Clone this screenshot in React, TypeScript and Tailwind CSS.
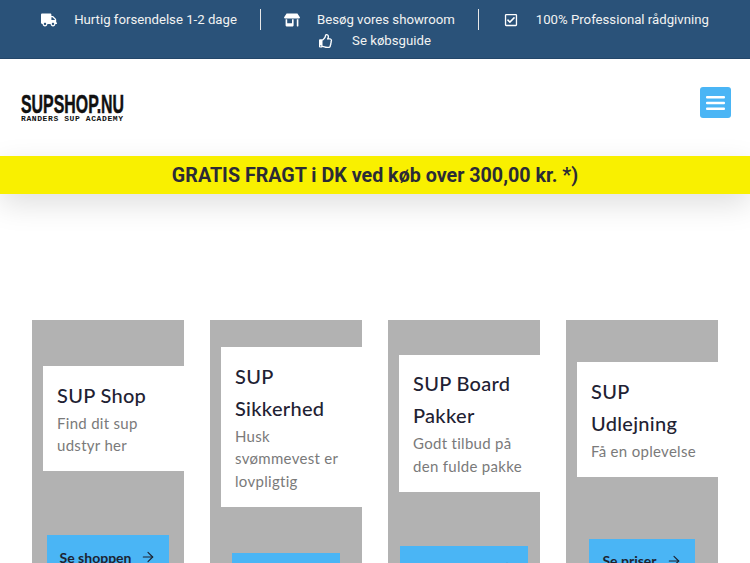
import React from 'react';
import { FaTruck, FaStoreAlt, FaRegCheckSquare, FaRegThumbsUp } from 'react-icons/fa';
import { ArrowRight } from 'lucide-react';

const cards = [
  { title: ['SUP Shop'], body: ['Find dit sup', 'udstyr her'], button: 'Se shoppen', top: 'mt-[46px]', gap: 'mt-[64px]' },
  { title: ['SUP', 'Sikkerhed'], body: ['Husk', 'svømmevest er', 'lovpligtig'], button: 'Se vester', top: 'mt-[27px]', gap: 'mt-[46px]' },
  { title: ['SUP Board', 'Pakker'], body: ['Godt tilbud på', 'den fulde pakke'], button: 'Se pakkerne', top: 'mt-[34.5px]', gap: 'mt-[54.5px]' },
  { title: ['SUP', 'Udlejning'], body: ['Få en oplevelse'], button: 'Se priser', top: 'mt-[42px]', gap: 'mt-[62px]' },
];

const App: React.FC = () => {
  return (
    <div className="h-[563px] w-[750px] overflow-hidden bg-white font-['Roboto',sans-serif]">
      {/* Top bar */}
      <div className="h-[59px] bg-[#2a5279] border-b border-[#234669] pt-[9px] text-[13.2px] leading-[21px] text-[#f2f2f2]">
        <div className="flex justify-center">
          <div className="flex items-center pr-[23px] h-[21px]">
            <FaTruck className="text-[16px] text-white mr-[17px]" />
            <span>Hurtig forsendelse 1-2 dage</span>
          </div>
          <div className="flex items-center pl-[23px] pr-[23px] h-[21px] border-l border-[#e8e8e8]">
            <FaStoreAlt className="text-[16px] text-white mr-[17px]" />
            <span>Besøg vores showroom</span>
          </div>
          <div className="flex items-center pl-[25px] h-[21px] border-l border-[#e8e8e8]">
            <FaRegCheckSquare className="text-[14px] text-white mr-[18px]" />
            <span>100% Professional rådgivning</span>
          </div>
        </div>
        <div className="flex justify-center items-center h-[21px]">
          <FaRegThumbsUp className="text-[14px] text-white mr-[19px]" />
          <span>Se købsguide</span>
        </div>
      </div>

      {/* Logo + menu */}
      <div className="h-[97px] flex items-center justify-between pl-[21px] pr-[19px]">
        <div className="flex flex-col w-[103px] mt-[1px]">
          <span className="block font-['Liberation_Sans',sans-serif] font-bold text-[26.5px] leading-[20px] text-[#111] whitespace-nowrap origin-left scale-x-[0.6] w-[172px] [-webkit-text-stroke:0.5px_#111]">
            SUPSHOP.NU
          </span>
          <span className="block font-['Liberation_Mono',monospace] font-bold text-[8px] leading-[8px] text-[#111] whitespace-nowrap tracking-[0.6px] mt-[1px]">
            RANDERS SUP ACADEMY
          </span>
        </div>
        <button className="w-[31px] h-[31px] rounded-[3px] bg-[#4ab5f5] flex items-center justify-center mb-[10px]">
          <svg width="19" height="14" viewBox="0 0 19 14" fill="#fff">
            <rect x="0" y="0" width="19" height="2.6" rx="1" />
            <rect x="0" y="5.7" width="19" height="2.6" rx="1" />
            <rect x="0" y="11.4" width="19" height="2.6" rx="1" />
          </svg>
        </button>
      </div>

      {/* Banner */}
      <div className="h-[38px] pt-[1px] bg-[#f9f000] flex items-center justify-center text-[19.7px] font-bold text-[#2b2b36] shadow-[0_10px_30px_rgba(0,0,0,0.13)]">
        GRATIS FRAGT i DK ved køb over 300,00 kr. *)
      </div>

      {/* Cards */}
      <div className="mt-[126px] pl-[32px] flex gap-[26px] font-['Lato',sans-serif]">
        {cards.map((card) => (
          <div key={card.button} className="w-[152px] h-[330px] bg-[#b2b2b2] flex flex-col">
            <div className={`ml-[11px] bg-white pl-[14px] pt-[12.5px] pb-[14.5px] ${card.top}`}>
              <div className="mb-[1px]">
                {card.title.map((line) => (
                  <div key={line} className="text-[20px] leading-[32px] font-medium text-[#1f2233] tracking-[0.3px]">
                    {line}
                  </div>
                ))}
              </div>
              {card.body.map((line) => (
                <div key={line} className="text-[15px] leading-[22.5px] text-[#7a7a7a] tracking-[0.3px]">
                  {line}
                </div>
              ))}
            </div>
            <div className={`flex justify-center ${card.gap}`}>
              <div className="flex items-center gap-[9px] bg-[#4ab5f5] pl-[13px] pr-[13px] h-[44px] text-[14px] font-bold text-[#1c2331] whitespace-nowrap">
                {card.button}
                <ArrowRight size={16} strokeWidth={1.75} />
              </div>
            </div>
          </div>
        ))}
      </div>
    </div>
  );
};

export default App;
